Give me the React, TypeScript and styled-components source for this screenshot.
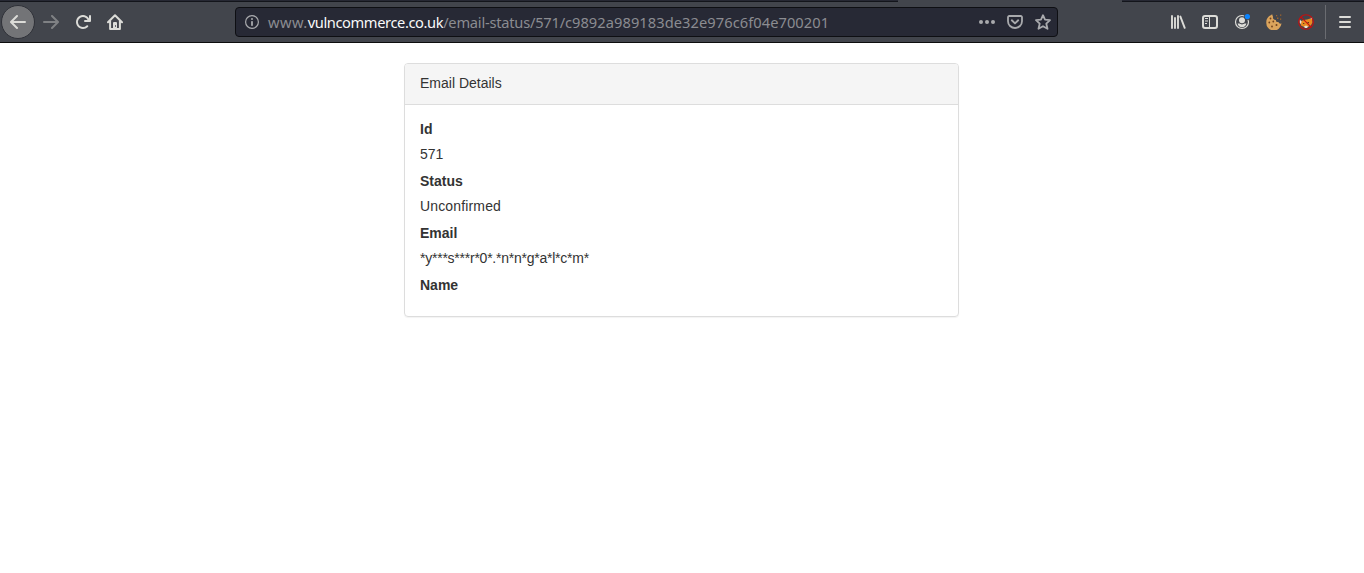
import React from 'react';
import styled, { createGlobalStyle } from 'styled-components';

const GlobalStyle = createGlobalStyle`
  * { box-sizing: border-box; }
  html, body { margin: 0; background: #fff; overflow: hidden; }
`;

const Window = styled.div`
  display: flex;
  flex-direction: column;
  height: 573px;
`;

const TabStrip = styled.div`
  display: grid;
  grid-template-columns: 898px 224px 1fr;
  height: 2px;
  background: #42454c;
`;

const InactiveTabs = styled.div`
  height: 2px;
  background: #262833;
  border-bottom: 1px solid #13151b;
`;

const Toolbar = styled.header`
  display: flex;
  align-items: center;
  height: 41px;
  background: #42454c;
  border-bottom: 1px solid #0c0c0d;
`;

const NavButtons = styled.nav`
  display: flex;
  align-items: center;
  width: 235px;
  padding-left: 1px;
`;

const ToolButton = styled.button<{ $dim?: boolean }>`
  display: flex;
  align-items: center;
  justify-content: center;
  width: 32px;
  height: 32px;
  padding: 0;
  border: 0;
  background: transparent;
  color: #dcdcd8;
  opacity: ${(p) => (p.$dim ? 0.4 : 1)};
`;

const BackButton = styled(ToolButton)`
  width: 34px;
  height: 34px;
  border: 1px solid #2f3138;
  border-radius: 50%;
  background: #737477;
`;

const UrlBar = styled.div`
  display: flex;
  align-items: center;
  width: 823px;
  height: 30px;
  padding: 0 6px 0 9px;
  border: 1px solid #0e0f13;
  border-radius: 4px;
  background: #272935;
  color: #a9aaad;
`;

const Url = styled.div`
  flex: 1;
  margin-left: 7px;
  font: 14.67px/20px 'Noto Sans', sans-serif;
  color: #8b8c91;
  white-space: nowrap;
`;

const UrlPart = styled.span<{ $spacing: number; $strong?: boolean }>`
  letter-spacing: ${(p) => p.$spacing}px;
  color: ${(p) => (p.$strong ? '#f9f9fa' : 'inherit')};
`;

const UrlActions = styled.div`
  display: flex;
  align-items: center;
  gap: 12px;
`;

const Extensions = styled.div`
  display: flex;
  align-items: center;
  margin-left: 104px;
`;

const Divider = styled.div`
  width: 1px;
  height: 34px;
  margin: 0 3px;
  background: #6a6c71;
`;

const Page = styled.main`
  padding: 20px 0 0 404px;
  font: 14px/26px 'Liberation Sans', Arial, sans-serif;
  color: #333;
`;

const Panel = styled.section`
  width: 555px;
  height: 254px;
  border: 1px solid #ddd;
  border-radius: 4px;
  box-shadow: 0 1px 1px rgba(0, 0, 0, 0.05);
`;

const PanelHeading = styled.div`
  height: 41px;
  padding: 6px 15px;
  border-bottom: 1px solid #ddd;
  border-radius: 3px 3px 0 0;
  background: #f5f5f5;
`;

const Details = styled.dl`
  margin: 0;
  padding: 11px 15px;
`;

const Term = styled.dt`
  height: 26px;
  font-weight: 700;
`;

const Value = styled.dd<{ $spacing: number }>`
  height: 26px;
  margin: 0;
  line-height: 24px;
  letter-spacing: ${(p) => p.$spacing}px;
`;

const Icon = ({ children }: { children: React.ReactNode }) => (
  <svg width="16" height="16" viewBox="0 0 16 16" fill="currentColor">
    {children}
  </svg>
);

const Arrow = () => (
  <path d="M15 7H3.414l4.293-4.293a1 1 0 0 0-1.414-1.414l-6 6a1 1 0 0 0 0 1.414l6 6a1 1 0 0 0 1.414-1.414L3.414 9H15a1 1 0 0 0 0-2z" />
);

const fields = [
  { term: 'Id', value: '571', spacing: 0 },
  { term: 'Status', value: 'Unconfirmed', spacing: 0.15 },
  { term: 'Email', value: '*y***s***r*0*.*n*n*g*a*l*c*m*', spacing: -0.24 },
  { term: 'Name', value: '', spacing: 0 },
];

export default function App() {
  return (
    <Window>
      <GlobalStyle />
      <TabStrip>
        <InactiveTabs />
        <div />
        <InactiveTabs />
      </TabStrip>
      <Toolbar>
        <NavButtons>
          <BackButton aria-label="Back">
            <Icon><Arrow /></Icon>
          </BackButton>
          <ToolButton aria-label="Forward" $dim>
            <Icon><g transform="translate(16 0) scale(-1 1)"><Arrow /></g></Icon>
          </ToolButton>
          <ToolButton aria-label="Reload">
            <Icon>
              <path d="M15 1a1 1 0 0 0-1 1v2.418A6.995 6.995 0 1 0 8 15a6.954 6.954 0 0 0 4.95-2.05 1 1 0 0 0-1.414-1.414A5.019 5.019 0 1 1 12.549 6H10a1 1 0 0 0 0 2h5a1 1 0 0 0 1-1V2a1 1 0 0 0-1-1z" />
            </Icon>
          </ToolButton>
          <ToolButton aria-label="Home">
            <Icon>
              <path d="M1 8.2 8 1.2l7 7M3.1 7v8h9.8V7" fill="none" stroke="currentColor" strokeWidth="2" strokeLinecap="round" strokeLinejoin="round" />
              <path d="M6 9a1 1 0 0 1 1-1h2a1 1 0 0 1 1 1v6H6z" />
              <path d="M8 11.2h1v1.6H8z" fill="#42454c" />
            </Icon>
          </ToolButton>
        </NavButtons>
        <UrlBar>
          <Icon>
            <circle cx="7" cy="8" r="6.4" fill="none" stroke="currentColor" strokeWidth="1.2" />
            <rect x="6.1" y="7" width="1.8" height="5" rx=".8" />
            <circle cx="7" cy="4.9" r="1" />
          </Icon>
          <Url>
            <UrlPart $spacing={0.45}>www.</UrlPart>
            <UrlPart $spacing={-0.4} $strong>vulncommerce.co.uk</UrlPart>
            <UrlPart $spacing={-0.23}>/email-status/571/</UrlPart>
            <UrlPart $spacing={0.06}>c9892a989183de32e976c6f04e700201</UrlPart>
          </Url>
          <UrlActions>
            <Icon>
              <circle cx="2" cy="8" r="2" />
              <circle cx="8" cy="8" r="2" />
              <circle cx="14" cy="8" r="2" />
            </Icon>
            <Icon>
              <path d="M2.2 2h11.6a1.2 1.2 0 0 1 1.2 1.2v4a7 6.8 0 0 1-14 0v-4A1.2 1.2 0 0 1 2.2 2z" fill="none" stroke="currentColor" strokeWidth="1.8" />
              <path d="M4.8 6.3 8 9.4l3.2-3.1" fill="none" stroke="currentColor" strokeWidth="1.9" strokeLinecap="round" strokeLinejoin="round" />
            </Icon>
            <Icon>
              <path d="M8 1.2l2 4.5 5 .5-3.7 3.5 1.2 5.1L8 12.2l-4.5 2.6 1.2-5.1L1 6.2l5-.5z" fill="none" stroke="currentColor" strokeWidth="1.8" strokeLinejoin="round" />
            </Icon>
          </UrlActions>
        </UrlBar>
        <Extensions>
          <ToolButton aria-label="Library">
            <Icon>
              <path d="M2 2v12M5 4v10M8 2v12M10.4 2.6l4.3 11.2" fill="none" stroke="currentColor" strokeWidth="1.9" strokeLinecap="round" />
            </Icon>
          </ToolButton>
          <ToolButton aria-label="Sidebars">
            <Icon>
              <rect x="1" y="2" width="14" height="12" rx="2" fill="none" stroke="currentColor" strokeWidth="2" />
              <path d="M7.5 2v12M3 4.5h3M3 7h3M3 9.5h2" fill="none" stroke="currentColor" strokeWidth="1" />
            </Icon>
          </ToolButton>
          <ToolButton aria-label="Account">
            <Icon>
              <circle cx="8" cy="8" r="6.5" fill="none" stroke="currentColor" strokeWidth="1.2" />
              <circle cx="8" cy="6.2" r="3" />
              <path d="M3.6 9.6h1.7c1.4 1.1 4 1.1 5.4 0h1.7c-.4 2.4-2.2 3.6-4.4 3.6s-4-1.2-4.4-3.6z" />
              <circle cx="13.4" cy="2.6" r="3.3" fill="#42454c" />
              <circle cx="13.4" cy="2.6" r="2.6" fill="#0a84ff" />
            </Icon>
          </ToolButton>
          <ToolButton aria-label="Cookies">
            <Icon>
              <path d="M6.5.6C3 1.2.3 4.3.3 8.1a7.6 7.6 0 0 0 15.2 1.5c-1.6.3-2.7-.3-3-1.6-1.6.3-2.7-.5-2.6-2-2 .1-3.6-1.5-2.8-3.1C6.6 2 6.3 1.3 6.5.6z" fill="#dba45c" />
              <g fill="#70421d">
                <circle cx="4.5" cy="4.5" r=".9" />
                <circle cx="7.3" cy="7.5" r=".9" />
                <circle cx="3.3" cy="8.5" r=".9" />
                <circle cx="6" cy="12.5" r=".9" />
                <circle cx="10.5" cy="11" r="1" />
              </g>
              <path d="M10 1h1.2v1.2H10zM14 .5h1.3v1.3H14zM11 3.5h1.4v1.4H11zM14 4.5h1.2v1.2H14z" fill="#a0652b" />
            </Icon>
          </ToolButton>
          <ToolButton aria-label="Proxy">
            <Icon>
              <path d="M2 7c2 .3 4-1.5 7-1.5L14 4l.5 4.5-1.7 3L8 14l-5-2.5z" fill="#e98a20" />
              <path d="M1.5 5l2 2.5-.5 2.500-1.200-1zM6 12.500l2-1 2 1-1 1.500H7zM12.500 4l1.500-1 .5 3z" fill="#e7e2dc" />
              <path d="M9.5 8H11v1.2H9.5zM5 9h1.3v1.1H5z" fill="#65391c" />
              <circle cx="8" cy="8" r="7.3" fill="none" stroke="#c90d0d" strokeWidth="1.1" />
              <path d="M2.9 2.9l10.2 10.2" stroke="#c90d0d" strokeWidth="1.1" />
            </Icon>
          </ToolButton>
          <Divider />
          <ToolButton aria-label="Menu">
            <Icon>
              <path d="M3 3h10M3 8h10M3 13h10" fill="none" stroke="currentColor" strokeWidth="2" strokeLinecap="round" />
            </Icon>
          </ToolButton>
        </Extensions>
      </Toolbar>
      <Page>
        <Panel>
          <PanelHeading>Email Details</PanelHeading>
          <Details>
            {fields.map(({ term, value, spacing }) => (
              <React.Fragment key={term}>
                <Term>{term}</Term>
                {value && <Value $spacing={spacing}>{value}</Value>}
              </React.Fragment>
            ))}
          </Details>
        </Panel>
      </Page>
    </Window>
  );
}
